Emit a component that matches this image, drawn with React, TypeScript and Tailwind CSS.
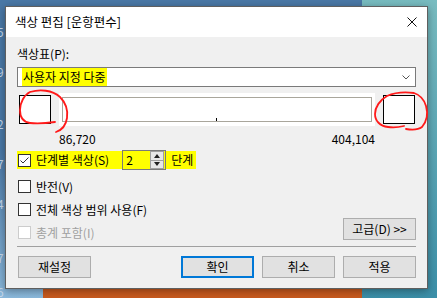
import React from 'react';

const font = { fontFamily: '"Noto Sans CJK KR", "Noto Sans", sans-serif' };

const CheckBox = ({ checked, disabled }: { checked?: boolean; disabled?: boolean }) => (
  <div
    className={`w-[13px] h-[13px] shrink-0 border bg-white flex items-center justify-center ${
      disabled ? 'border-[#cccccc]' : 'border-[#333333]'
    }`}
  >
    {checked && (
      <svg width="11" height="11" viewBox="0 0 11 11">
        <path d="M1.5 5.5 L4 8 L9.5 2.5" fill="none" stroke="#333" strokeWidth="1" />
      </svg>
    )}
  </div>
);

const Button = ({ label, primary }: { label: string; primary?: boolean }) => (
  <div
    className={`w-[73px] h-[22px] flex items-center justify-center bg-[#e1e1e1] text-[12px] text-black ${
      primary ? 'border-2 border-[#0078d7]' : 'border border-[#adadad]'
    }`}
  >
    {label}
  </div>
);

const Swatch = () => <div className="w-[32px] h-[29px] border border-black bg-white shrink-0" />;

export default function App() {
  return (
    <div className="relative w-[437px] h-[298px] overflow-hidden bg-[#4a78a6]" style={font}>
      {/* desktop backdrop */}
      <div className="absolute right-0 top-0 w-[75px] h-full bg-gradient-to-b from-[#78bcc0] to-[#3b8fa8]" />
      <div className="absolute left-0 top-[150px] w-[43px] h-[148px] bg-gradient-to-b from-[#4a78a6] to-[#8bb9dc]" />
      <div className="absolute left-[43px] top-[289px] w-[319px] h-[9px] bg-[#c85a1e]" />
      <div className="absolute left-[-3px] top-0 flex flex-col text-[12px] text-[#c8d8ea] leading-none">
        <span className="mt-[26px]">5</span>
        <span className="mt-[28px]">9</span>
        <span className="mt-[40px]">2</span>
        <span className="mt-[28px]">7</span>
        <span className="mt-[28px]">4</span>
        <span className="mt-[42px]">7</span>
        <span className="mt-[22px]">6</span>
      </div>

      {/* dialog window */}
      <div className="absolute left-[5px] top-[6px] w-[423px] h-[283px] border border-[#5f5f5f] bg-[#f0f0f0] shadow-[0_2px_8px_rgba(0,0,0,0.35)] flex flex-col">
        <div className="h-[30px] bg-white flex items-center justify-between pl-[9px] pr-[10px] shrink-0">
          <span className="text-[12.5px] text-black">색상 편집 [운항편수]</span>
          <svg width="10" height="10" viewBox="0 0 10 10">
            <path d="M0.5 0.5 L9.5 9.5 M9.5 0.5 L0.5 9.5" stroke="#111" strokeWidth="1" />
          </svg>
        </div>

        <div className="flex flex-col px-[11px] pt-[9px] text-[12px] text-black">
          <div className="h-[16px] leading-[16px]">색상표(P):</div>

          <div className="mt-[5px] h-[20px] border border-[#7a7a7a] bg-white flex items-center justify-between pl-[4px] pr-[5px]">
            <span className="bg-[#ffff00] h-[18px] leading-[18px] pl-[1px] pr-[1px]">사용자 지정 다중</span>
            <svg width="8" height="5" viewBox="0 0 8 5">
              <path d="M0.5 0.5 L4 4 L7.5 0.5" fill="none" stroke="#555" strokeWidth="1" />
            </svg>
          </div>

          <div className="mt-[6px] h-[33px] flex items-center pl-[2px]">
            <Swatch />
            <div className="ml-[8px] w-[316px] h-[33px] bg-white px-[3px] py-[4px]">
              <div className="relative w-full h-full border border-[#a9a69c]">
                <div className="absolute left-[153px] bottom-0 w-px h-[3px] bg-black" />
              </div>
            </div>
            <div className="ml-[8px]">
              <Swatch />
            </div>
          </div>

          <div className="mt-[5px] h-[16px] leading-[16px] flex justify-between pl-[42px] pr-[41px]">
            <span>86,720</span>
            <span>404,104</span>
          </div>

          <div className="mt-[3px] h-[20px] flex items-center">
            <div className="flex items-center h-[18px] bg-[#ffff00] pl-px pr-[3px]">
              <CheckBox checked />
              <span className="ml-[5px]">단계별 색상(S)</span>
              <div className="ml-[13px] w-[44px] h-[20px] border border-[#7a7a7a] flex items-center justify-between pl-[3px] pr-px">
                <span>2</span>
                <div className="w-[14px] h-[18px] flex flex-col border border-[#a0a0a0] bg-[#e8e8e8]">
                  <div className="flex-1 flex items-center justify-center border-b border-[#a0a0a0]">
                    <svg width="6" height="4" viewBox="0 0 6 4">
                      <path d="M0 4 L3 0 L6 4 Z" fill="#222" />
                    </svg>
                  </div>
                  <div className="flex-1 flex items-center justify-center">
                    <svg width="6" height="4" viewBox="0 0 6 4">
                      <path d="M0 0 L3 4 L6 0 Z" fill="#222" />
                    </svg>
                  </div>
                </div>
              </div>
              <span className="ml-[5px]">단계</span>
            </div>
          </div>

          <div className="mt-[5px] h-[23px] flex items-center pl-px">
            <CheckBox />
            <span className="ml-[5px]">반전(V)</span>
          </div>
          <div className="h-[20px] flex items-center pl-px">
            <div className="flex items-center mt-[3px]">
              <CheckBox />
              <span className="ml-[5px]">전체 색상 범위 사용(F)</span>
            </div>
          </div>
          <div className="h-[22px] flex items-end justify-between">
            <div className="h-[15px] flex items-center pl-px">
              <CheckBox disabled />
              <span className="ml-[5px] text-[#a0a0a0]">총계 포함(I)</span>
            </div>
            <Button label="고급(D) >>" />
          </div>

          <div className="mt-[6px] h-px bg-[#a0a0a0]" />

          <div className="mt-[9px] flex items-center pl-px">
            <Button label="재설정" />
            <div className="ml-auto flex gap-[8px]">
              <Button label="확인" primary />
              <Button label="취소" />
              <Button label="적용" />
            </div>
          </div>
        </div>
      </div>

      {/* red annotation circles */}
      <svg className="absolute left-0 top-0 pointer-events-none" width="437" height="298" viewBox="0 0 437 298">
        <path
          d="M30 92 C40 89 52 90 60 97 C66 103 68 111 67 118 C66 125 62 130 56 132 M30 92 C24 95 20 103 20 110 C20 117 23 122 30 123 C38 124 48 123 55 122"
          fill="none"
          stroke="#ff1a1a"
          strokeWidth="1.8"
          strokeLinecap="round"
        />
        <path
          d="M387 96 C396 92 406 92 414 93 C420 95 424 99 426 106 C428 113 427 121 422 127 C418 130 412 130 406 129 M387 96 C380 100 375 107 375 114 C375 121 380 126 388 127 C394 128 400 127 404 126"
          fill="none"
          stroke="#ff1a1a"
          strokeWidth="1.8"
          strokeLinecap="round"
        />
      </svg>
    </div>
  );
}
